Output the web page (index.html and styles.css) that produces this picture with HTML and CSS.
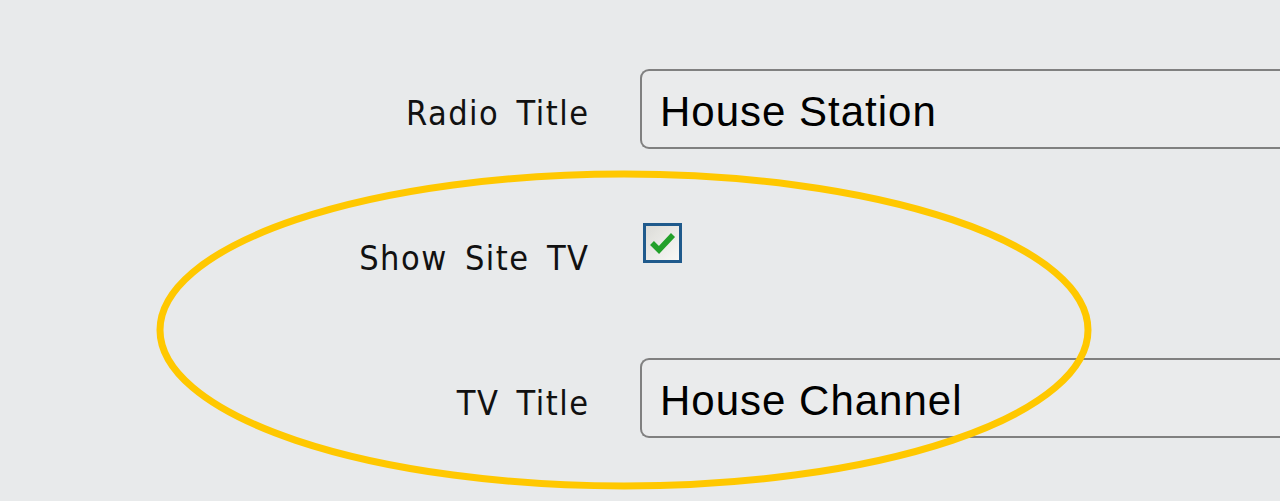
FILE: index.html
```html
<!DOCTYPE html>
<html>
<head>
<meta charset="utf-8">
<link rel="stylesheet" href="styles.css">
</head>
<body>
<div class="form">
  <div class="row row-radio">
    <label class="label">Radio Title</label>
    <div class="field"><div class="input">House Station</div></div>
  </div>
  <div class="row row-check">
    <label class="label">Show Site TV</label>
    <div class="field field-check">
      <span class="checkbox">
        <svg width="26" height="22" viewBox="0 0 26 22"><path d="M2 11 L9 18 L23 3" fill="none" stroke="#22a02a" stroke-width="5.5" stroke-linejoin="miter"/></svg>
      </span>
    </div>
  </div>
  <div class="row row-tv">
    <label class="label">TV Title</label>
    <div class="field"><div class="input">House Channel</div></div>
  </div>
</div>
<svg class="ring" width="1280" height="501" viewBox="0 0 1280 501">
  <ellipse cx="624" cy="330" rx="464" ry="156" fill="none" stroke="#ffc800" stroke-width="7"/>
</svg>
</body>
</html>
```

FILE: styles.css
```css
html, body {
  margin: 0;
  padding: 0;
  background: #e8eaeb;
  width: 1280px;
  height: 501px;
  overflow: hidden;
}
.form {
  display: flex;
  flex-direction: column;
  padding-top: 69px;
}
.row {
  display: grid;
  grid-template-columns: 588px 1fr;
  column-gap: 52px;
  height: 80px;
}
.row-check {
  margin-top: 69px;
}
.row-tv {
  margin-top: 60px;
}
.label {
  font-family: "DejaVu Sans Condensed", "DejaVu Sans", sans-serif;
  font-size: 34px;
  letter-spacing: 1.5px;
  word-spacing: 6px;
  color: #111;
  text-align: right;
  align-self: center;
  padding-top: 8px;
  margin-right: -1.5px;
}
.row-check .label {
  padding-top: 0;
}
.row-tv .label {
  padding-top: 10px;
}
.input {
  box-sizing: border-box;
  height: 80px;
  border: 2px solid #808080;
  border-right: none;
  border-radius: 9px 0 0 9px;
  background: #eaebec;
  padding-left: 18px;
  display: flex;
  align-items: center;
  padding-top: 6px;
  font-family: "Liberation Sans", Arial, sans-serif;
  font-size: 42px;
  letter-spacing: 1px;
  color: #000;
}
.field-check {
  padding-top: 5px;
  padding-left: 3px;
}
.checkbox {
  box-sizing: border-box;
  width: 39px;
  height: 40px;
  border: 3px solid #1f5a8c;
  background: linear-gradient(135deg, #dcdcd8, #f8f8f6);
  display: flex;
  align-items: center;
  justify-content: center;
}
.ring {
  position: absolute;
  left: 0;
  top: 0;
}
```
